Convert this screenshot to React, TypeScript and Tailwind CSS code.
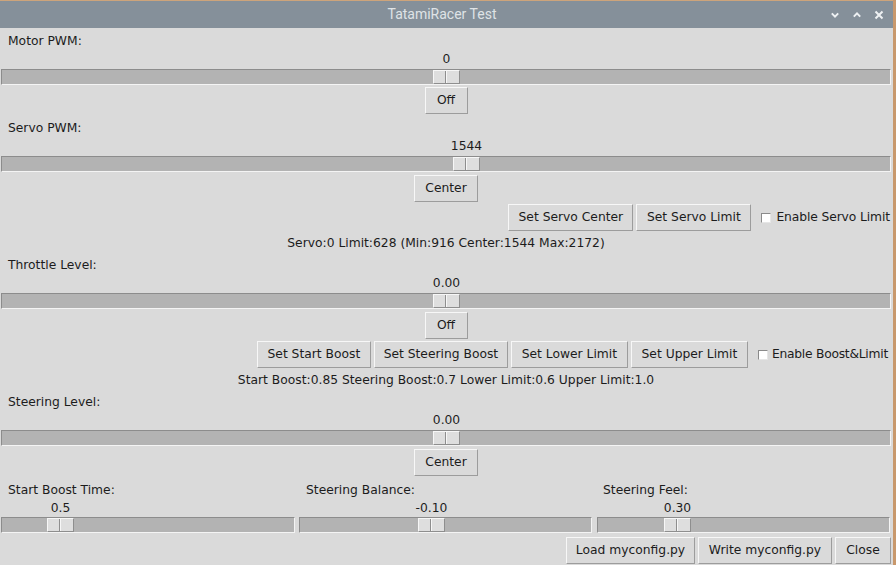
import React from "react";

function Btn({ className, children }: { className: string; children: React.ReactNode }) {
  return (
    <div
      className={
        "h-[27px] shrink-0 flex items-center justify-center bg-[#dadada] border border-t-[#f7f7f7] border-l-[#f7f7f7] border-b-[#9c9c9c] border-r-[#9c9c9c] whitespace-nowrap " +
        className
      }
    >
      {children}
    </div>
  );
}

function Trough({ left }: { left: number }) {
  return (
    <div className="relative h-[16px] bg-[#b3b3b3] border border-t-[#8c8c8c] border-l-[#8c8c8c] border-b-[#f4f4f4] border-r-[#f4f4f4]">
      <div
        className="absolute top-0 bottom-0 w-[27px] flex bg-[#dedede] border border-t-[#f7f7f7] border-l-[#f7f7f7] border-b-[#8e8e8e] border-r-[#8e8e8e]"
        style={{ left }}
      >
        <div className="w-[11px]" />
        <div className="w-[1px] bg-[#8e8e8e]" />
        <div className="w-[1px] bg-[#f7f7f7]" />
      </div>
    </div>
  );
}

function Scale({ value, left, tall }: { value: string; left: number; tall?: boolean }) {
  return (
    <div>
      <div className={tall ? "relative h-[19px]" : "relative h-[18px]"}>
        <span
          className="absolute top-0 h-full flex items-center -translate-x-1/2 whitespace-nowrap"
          style={{ left: left + 1 + 13.5 }}
        >
          {value}
        </span>
      </div>
      <Trough left={left} />
    </div>
  );
}

function Check({ label, gap }: { label: string; gap: string }) {
  return (
    <div className="flex items-center ml-[7px] whitespace-nowrap">
      <span className="w-[10px] h-[10px] bg-white border border-t-[#8a8a8a] border-l-[#8a8a8a] border-b-[#e6e6e6] border-r-[#e6e6e6]" />
      <span className={gap}>{label}</span>
    </div>
  );
}

function Label({ children, className }: { children: React.ReactNode; className: string }) {
  return <div className={"h-[18px] flex items-center whitespace-nowrap " + className}>{children}</div>;
}

export default function App() {
  return (
    <div className="w-[896px] h-[565px] overflow-hidden flex bg-[#c8986c] font-['DejaVu_Sans',sans-serif] text-[12.3px] text-[#1c1c1c]">
      <div className="w-[893px] h-full flex flex-col">
        <div className="h-[1px] bg-[#cda47b]" />
        <div className="h-[27px] bg-[#85909a] flex items-center">
          <div className="flex-1" />
          <div className="font-['Roboto',sans-serif] text-[14px] text-[#dfe3e6]">TatamiRacer Test</div>
          <div className="flex-1 flex justify-end items-center gap-[12px] pr-[9px]">
            <svg width="10" height="10" viewBox="0 0 10 10">
              <path d="M1.8 3.4 L5 6.6 L8.2 3.4" fill="none" stroke="#eef1f3" strokeWidth="2" />
            </svg>
            <svg width="10" height="10" viewBox="0 0 10 10">
              <path d="M1.8 6.6 L5 3.4 L8.2 6.6" fill="none" stroke="#eef1f3" strokeWidth="2" />
            </svg>
            <svg width="10" height="10" viewBox="0 0 10 10">
              <path d="M1.5 1.5 L8.5 8.5 M8.5 1.5 L1.5 8.5" fill="none" stroke="#eef1f3" strokeWidth="2" />
            </svg>
          </div>
        </div>
        <div className="flex-1 bg-[#dadada] flex flex-col pl-[1px] pr-[2px]">
          {/* Motor */}
          <Label className="mt-[4px] pl-[7px]">Motor PWM:</Label>
          <Scale value="0" left={431} tall />
          <div className="flex justify-center mt-[2px]">
            <Btn className="w-[43px]">Off</Btn>
          </div>

          {/* Servo */}
          <Label className="mt-[5px] pl-[7px]">Servo PWM:</Label>
          <Scale value="1544" left={451} tall />
          <div className="flex justify-center mt-[3px]">
            <Btn className="w-[64px]">Center</Btn>
          </div>
          <div className="flex justify-end items-center gap-[3px] mt-[2px] pr-[1px]">
            <Btn className="w-[125px]">Set Servo Center</Btn>
            <Btn className="w-[115px]">Set Servo Limit</Btn>
            <Check label="Enable Servo Limit" gap="ml-[5px] tracking-[-0.1px]" />
          </div>
          <div className="h-[25px] flex items-center justify-center whitespace-nowrap">
            Servo:0 Limit:628 (Min:916 Center:1544 Max:2172)
          </div>

          {/* Throttle */}
          <Label className="pl-[7px]">Throttle Level:</Label>
          <Scale value="0.00" left={431} tall />
          <div className="flex justify-center mt-[3px]">
            <Btn className="w-[43px]">Off</Btn>
          </div>
          <div className="flex justify-end items-center gap-[3px] mt-[2px] pr-[3px]">
            <Btn className="w-[114px]">Set Start Boost</Btn>
            <Btn className="w-[134px]">Set Steering Boost</Btn>
            <Btn className="w-[117px]">Set Lower Limit</Btn>
            <Btn className="w-[117px]">Set Upper Limit</Btn>
            <Check label="Enable Boost&Limit" gap="ml-[4px] tracking-[-0.25px]" />
          </div>
          <div className="h-[25px] flex items-center justify-center whitespace-nowrap">
            Start Boost:0.85 Steering Boost:0.7 Lower Limit:0.6 Upper Limit:1.0
          </div>

          {/* Steering */}
          <Label className="pl-[7px]">Steering Level:</Label>
          <Scale value="0.00" left={431} tall />
          <div className="flex justify-center mt-[3px]">
            <Btn className="w-[64px]">Center</Btn>
          </div>

          {/* Three sliders */}
          <div className="flex mt-[5px]">
            <div className="w-[296px] flex flex-col">
              <Label className="pl-[7px]">Start Boost Time:</Label>
              <div className="mr-[2px]">
                <Scale value="0.5" left={45} />
              </div>
            </div>
            <div className="w-[297px] flex flex-col">
              <Label className="pl-[9px]">Steering Balance:</Label>
              <div className="ml-[2px] mr-[2px]">
                <Scale value="-0.10" left={118} />
              </div>
            </div>
            <div className="flex-1 flex flex-col">
              <Label className="pl-[9px]">Steering Feel:</Label>
              <div className="ml-[3px] mr-[1px]">
                <Scale value="0.30" left={66} />
              </div>
            </div>
          </div>

          <div className="flex justify-end gap-[3px] mt-[4px]">
            <Btn className="w-[129px]">Load myconfig.py</Btn>
            <Btn className="w-[134px]">Write myconfig.py</Btn>
            <Btn className="w-[56px]">Close</Btn>
          </div>
        </div>
      </div>
      <div className="flex-1" />
    </div>
  );
}
